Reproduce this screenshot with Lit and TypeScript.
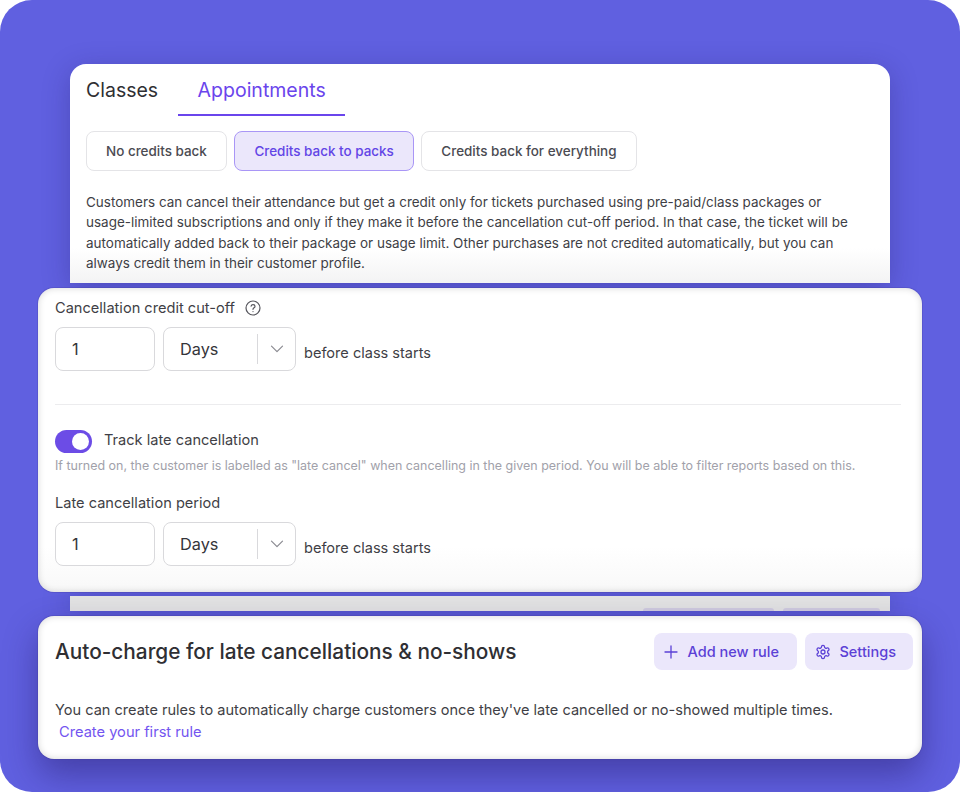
import { LitElement, html, css } from 'lit';
import { customElement } from 'lit/decorators.js';

const chevron = html`<svg class="chev" viewBox="0 0 14 8" width="14" height="8" fill="none" stroke="#8b8b92" stroke-width="1.2" stroke-linecap="round" stroke-linejoin="round"><path d="M1.5 1.2 7 6.7l5.5-5.5"/></svg>`;

@customElement('app-root')
export class AppRoot extends LitElement {
  static styles = css`
    :host {
      display: block;
      font-family: Inter, 'Liberation Sans', sans-serif;
      color: #3f3f46;
      background: #fff;
    }

    .stage {
      box-sizing: border-box;
      width: 960px;
      height: 792px;
      padding-top: 64px;
      border-radius: 32px;
      background: #6060e0;
      display: flex;
      flex-direction: column;
      align-items: center;
      overflow: hidden;
    }

    .back {
      box-sizing: border-box;
      width: 820px;
      height: 219px;
      padding: 0 16px;
      border-radius: 16px 16px 0 0;
      background: linear-gradient(#fff 0, #fff 84%, #f3f3f4 100%);
      box-shadow: 0 6px 28px rgba(30, 20, 90, 0.28);
    }

    .tabs {
      display: flex;
      height: 52px;
    }

    .tab {
      box-sizing: border-box;
      height: 52px;
      padding-top: 12px;
      font-size: 19.5px;
      line-height: 28px;
      color: #2f2f33;
    }

    .tab.on {
      width: 167px;
      margin-left: 20px;
      text-align: center;
      color: #6a45ec;
      border-bottom: 2px solid #6a45ec;
    }

    .pills {
      display: flex;
      gap: 7px;
      margin-top: 15px;
    }

    .pill {
      box-sizing: border-box;
      height: 40px;
      padding: 0 19px;
      display: flex;
      align-items: center;
      font-size: 13.46px;
      font-weight: 500;
      color: #4b4b52;
      border: 1px solid #e4e4e7;
      border-radius: 8px;
    }

    .pill.on {
      padding: 0 19.5px;
      color: #6245e6;
      background: #ebe7fb;
      border-color: #a996f6;
    }

    .desc {
      margin: 20.5px 0 0;
      font-size: 13.48px;
      line-height: 20.5px;
      color: #3f3f46;
    }

    .card {
      box-sizing: border-box;
      width: 884px;
      border-radius: 16px;
      background: #fff;
      position: relative;
      box-shadow: inset 0 0 7px rgba(0, 0, 0, 0.16), 0 0 0 1px rgba(60, 50, 140, 0.2);
    }

    .rules {
      height: 304px;
      margin-top: 5px;
      padding: 11px 21px 0 17px;
      background: linear-gradient(#fff 85%, #f8f8f8 100%);
    }

    .label {
      display: flex;
      align-items: center;
      gap: 10px;
      height: 18px;
      font-size: 14.6px;
      line-height: 18px;
    }

    .row {
      display: flex;
      gap: 8px;
      margin-top: 10px;
    }

    .field {
      box-sizing: border-box;
      height: 44px;
      border: 1px solid #d9d9dc;
      border-radius: 8px;
      background: #fff;
      display: flex;
      align-items: center;
      font-size: 16.3px;
      color: #35353a;
    }

    .num {
      width: 100px;
      padding-left: 16px;
    }

    .unit {
      width: 133px;
      padding-left: 16px;
    }

    .unit .name {
      width: 77px;
    }

    .unit .sep {
      width: 1px;
      height: 30px;
      background: #d9d9dc;
    }

    .unit .chev {
      margin-left: 12px;
    }

    .after {
      font-size: 14.55px;
      align-self: flex-end;
      line-height: 18px;
      margin-bottom: 9px;
      color: #3f3f46;
    }

    .divider {
      height: 1px;
      margin-top: 33px;
      background: #ececee;
    }

    .track {
      display: flex;
      align-items: center;
      gap: 12px;
      margin-top: 25px;
      font-size: 14.6px;
      line-height: 19px;
    }

    .track-text {
      margin-bottom: 2px;
    }

    .switch {
      box-sizing: border-box;
      width: 37px;
      height: 23px;
      padding: 3px;
      border-radius: 12px;
      background: #6c4ce6;
      display: flex;
      justify-content: flex-end;
    }

    .knob {
      width: 17px;
      height: 17px;
      border-radius: 50%;
      background: #fff;
    }

    .hint {
      margin-top: 5px;
      font-size: 12.47px;
      line-height: 16px;
      color: #a1a1aa;
    }

    .late {
      margin-top: 20px;
    }

    .strip {
      box-sizing: border-box;
      width: 820px;
      height: 15px;
      flex: none;
      margin-top: 4px;
      padding: 12px 10px 0 0;
      background: #e2e2e2;
      display: flex;
      justify-content: flex-end;
      gap: 9px;
      box-shadow: 0 0 28px rgba(30, 20, 90, 0.35);
    }

    .ghost {
      height: 3px;
      border-radius: 6px 6px 0 0;
      background: #cfcbde;
    }

    .charge {
      height: 143px;
      margin-top: 5px;
      padding: 17px 9px 0 17px;
      box-shadow: inset 0 0 7px rgba(0, 0, 0, 0.16), 0 0 0 1px rgba(60, 50, 140, 0.2), 0 16px 34px rgba(30, 20, 90, 0.42);
    }

    .head {
      display: flex;
      align-items: center;
      gap: 8px;
    }

    h2 {
      flex: 1;
      margin: 0;
      font-size: 20.8px;
      line-height: 37px;
      font-weight: 500;
      color: #2f2f33;
    }

    .btn {
      box-sizing: border-box;
      height: 37px;
      padding: 0 17px 0 10px;
      display: flex;
      align-items: center;
      gap: 8.5px;
      border-radius: 8px;
      background: #ebe7fb;
      color: #5b41d6;
      font-size: 14.5px;
      font-weight: 500;
    }

    .btn.add {
      gap: 10px;
      padding-right: 18px;
    }

    .body {
      margin-top: 29px;
      font-size: 14.55px;
      line-height: 22px;
      color: #3f3f46;
    }

    .link {
      display: block;
      padding-left: 4px;
      font-size: 14.65px;
      color: #7355f0;
    }
  `;

  private timeRow() {
    return html`
      <div class="row">
        <div class="field num">1</div>
        <div class="field unit">
          <span class="name">Days</span><span class="sep"></span>${chevron}
        </div>
        <span class="after">before class starts</span>
      </div>
    `;
  }

  render() {
    return html`
      <div class="stage">
        <section class="back">
          <div class="tabs">
            <div class="tab">Classes</div>
            <div class="tab on">Appointments</div>
          </div>
          <div class="pills">
            <div class="pill">No credits back</div>
            <div class="pill on">Credits back to packs</div>
            <div class="pill">Credits back for everything</div>
          </div>
          <p class="desc">
            Customers can cancel their attendance but get a credit only for tickets purchased using pre-paid/class packages or<br />
            usage-limited subscriptions and only if they make it before the cancellation cut-off period. In that case, the ticket will be<br />
            automatically added back to their package or usage limit. Other purchases are not credited automatically, but you can<br />
            always credit them in their customer profile.
          </p>
        </section>

        <section class="card rules">
          <div class="label">
            Cancellation credit cut-off
            <svg width="16" height="16" viewBox="0 0 16 16" fill="none" stroke="#55555c" stroke-width="1.2" stroke-linecap="round">
              <circle cx="8" cy="8" r="7"></circle>
              <path d="M6.1 6.2A1.95 1.95 0 0 1 8 4.7c1.1 0 2 .7 2 1.7 0 1.3-2 1.5-2 2.9"></path>
              <path d="M8 11.5v.1"></path>
            </svg>
          </div>
          ${this.timeRow()}
          <div class="divider"></div>
          <div class="track">
            <span class="switch"><span class="knob"></span></span>
            <span class="track-text">Track late cancellation</span>
          </div>
          <div class="hint">If turned on, the customer is labelled as "late cancel" when cancelling in the given period. You will be able to filter reports based on this.</div>
          <div class="label late">Late cancellation period</div>
          ${this.timeRow()}
        </section>

        <div class="strip">
          <span class="ghost" style="width:131px"></span>
          <span class="ghost" style="width:97px"></span>
        </div>

        <section class="card charge">
          <div class="head">
            <h2>Auto-charge for late cancellations &amp; no-shows</h2>
            <div class="btn add">
              <svg width="14" height="14" viewBox="0 0 14 14" fill="none" stroke="currentColor" stroke-width="1.3" stroke-linecap="round"><path d="M7 1v12M1 7h12"></path></svg>
              Add new rule
            </div>
            <div class="btn">
              <svg width="16" height="16" viewBox="0 0 24 24" fill="none" stroke="currentColor" stroke-width="1.9" stroke-linecap="round" stroke-linejoin="round">
                <path d="M12.22 2h-.44a2 2 0 0 0-2 2v.18a2 2 0 0 1-1 1.73l-.43.25a2 2 0 0 1-2 0l-.15-.08a2 2 0 0 0-2.73.73l-.22.38a2 2 0 0 0 .73 2.73l.15.1a2 2 0 0 1 1 1.72v.51a2 2 0 0 1-1 1.74l-.15.09a2 2 0 0 0-.73 2.73l.22.38a2 2 0 0 0 2.73.73l.15-.08a2 2 0 0 1 2 0l.43.25a2 2 0 0 1 1 1.73V20a2 2 0 0 0 2 2h.44a2 2 0 0 0 2-2v-.18a2 2 0 0 1 1-1.73l.43-.25a2 2 0 0 1 2 0l.15.08a2 2 0 0 0 2.73-.73l.22-.39a2 2 0 0 0-.73-2.73l-.15-.08a2 2 0 0 1-1-1.74v-.5a2 2 0 0 1 1-1.74l.15-.09a2 2 0 0 0 .73-2.73l-.22-.38a2 2 0 0 0-2.73-.73l-.15.08a2 2 0 0 1-2 0l-.43-.25a2 2 0 0 1-1-1.73V4a2 2 0 0 0-2-2z"></path>
                <circle cx="12" cy="12" r="3"></circle>
              </svg>
              Settings
            </div>
          </div>
          <div class="body">
            You can create rules to automatically charge customers once they've late cancelled or no-showed multiple times.
            <span class="link">Create your first rule</span>
          </div>
        </section>
      </div>
    `;
  }
}
